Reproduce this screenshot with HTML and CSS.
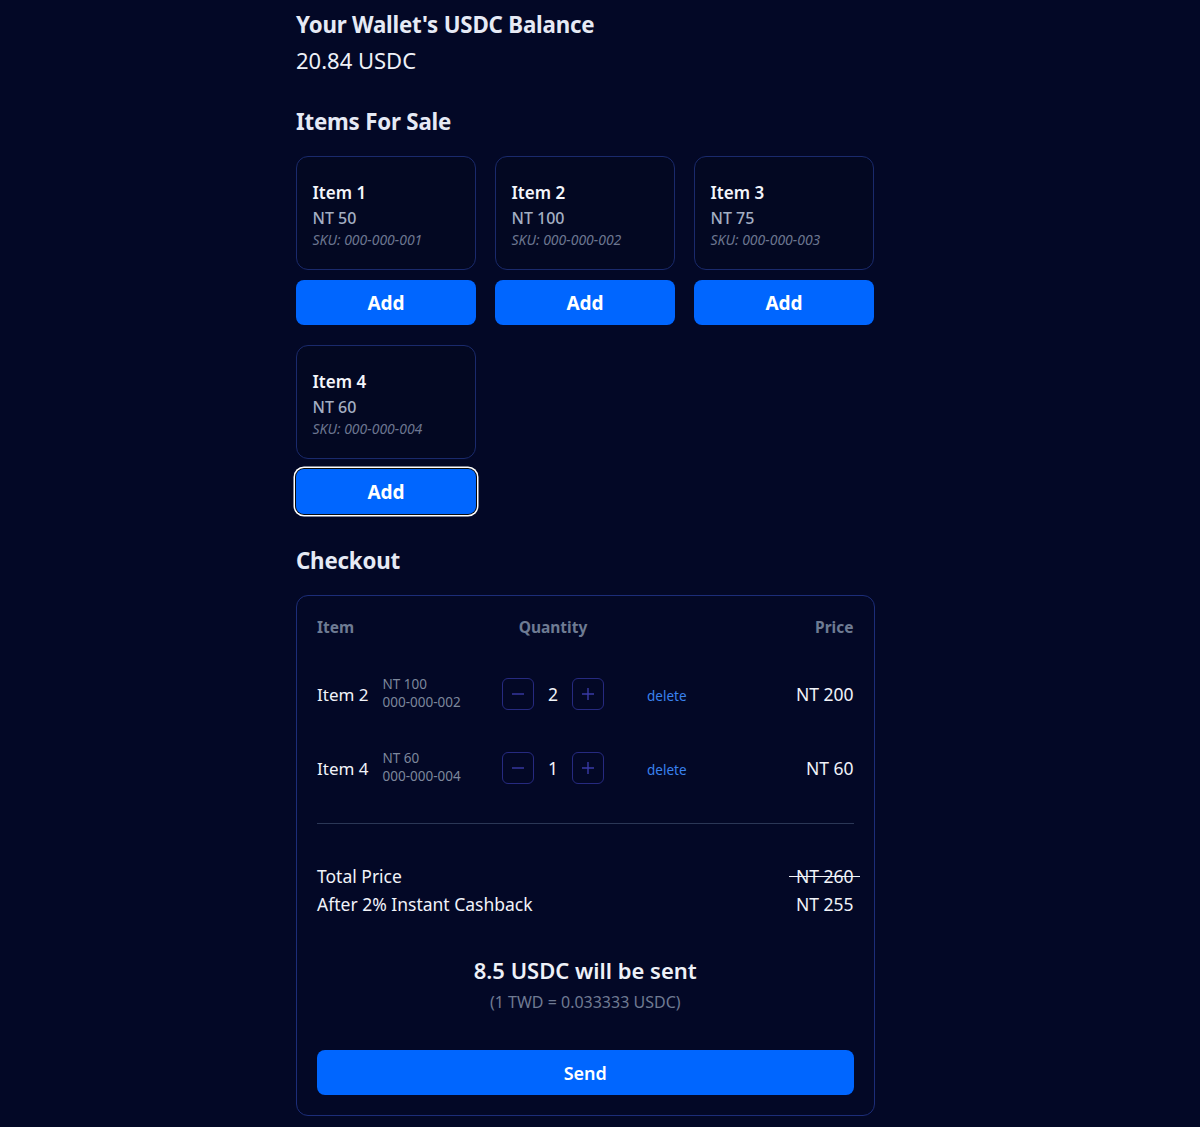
FILE: index.html
```html
<!DOCTYPE html>
<html lang="en">
<head>
<meta charset="utf-8">
<title>Shop</title>
<link rel="stylesheet" href="styles.css">
</head>
<body>
<main class="page">
  <h2 class="heading">Your Wallet's USDC Balance</h2>
  <p class="balance">20.84 USDC</p>

  <h2 class="heading section">Items For Sale</h2>
  <div class="products">
    <div class="product">
      <div class="card">
        <div class="card-title">Item 1</div>
        <div class="card-price">NT 50</div>
        <div class="card-sku">SKU: 000-000-001</div>
      </div>
      <button class="add">Add</button>
    </div>
    <div class="product">
      <div class="card">
        <div class="card-title">Item 2</div>
        <div class="card-price">NT 100</div>
        <div class="card-sku">SKU: 000-000-002</div>
      </div>
      <button class="add">Add</button>
    </div>
    <div class="product">
      <div class="card">
        <div class="card-title">Item 3</div>
        <div class="card-price">NT 75</div>
        <div class="card-sku">SKU: 000-000-003</div>
      </div>
      <button class="add">Add</button>
    </div>
    <div class="product">
      <div class="card">
        <div class="card-title">Item 4</div>
        <div class="card-price">NT 60</div>
        <div class="card-sku">SKU: 000-000-004</div>
      </div>
      <button class="add focused">Add</button>
    </div>
  </div>

  <h2 class="heading section checkout-title">Checkout</h2>
  <div class="checkout">
    <div class="cart">
      <div class="th">Item</div>
      <div class="th th-qty">Quantity</div>
      <div class="th"></div>
      <div class="th th-price">Price</div>

      <div class="td item-cell">
        <span class="item-name">Item 2</span>
        <span class="item-meta">NT 100<br>000-000-002</span>
      </div>
      <div class="td qty">
        <button class="qty-btn" aria-label="decrease"><svg viewBox="0 0 14 14" width="14" height="14"><path d="M1 7h12"/></svg></button>
        <span class="qty-num">2</span>
        <button class="qty-btn" aria-label="increase"><svg viewBox="0 0 14 14" width="14" height="14"><path d="M1 7h12M7 1v12"/></svg></button>
      </div>
      <div class="td del"><a class="delete" href="#">delete</a></div>
      <div class="td price">NT 200</div>

      <div class="td item-cell">
        <span class="item-name">Item 4</span>
        <span class="item-meta">NT 60<br>000-000-004</span>
      </div>
      <div class="td qty">
        <button class="qty-btn" aria-label="decrease"><svg viewBox="0 0 14 14" width="14" height="14"><path d="M1 7h12"/></svg></button>
        <span class="qty-num">1</span>
        <button class="qty-btn" aria-label="increase"><svg viewBox="0 0 14 14" width="14" height="14"><path d="M1 7h12M7 1v12"/></svg></button>
      </div>
      <div class="td del"><a class="delete" href="#">delete</a></div>
      <div class="td price">NT 60</div>
    </div>

    <hr class="divider">

    <div class="totals">
      <div class="total-row"><span>Total Price</span><span class="strike">NT 260</span></div>
      <div class="total-row"><span>After 2% Instant Cashback</span><span>NT 255</span></div>
    </div>

    <div class="summary">
      <div class="send-amount">8.5 USDC will be sent</div>
      <div class="rate">(1 TWD = 0.033333 USDC)</div>
    </div>

    <button class="send">Send</button>
  </div>
</main>
</body>
</html>
```

FILE: styles.css
```css
* { box-sizing: border-box; }

html, body {
  margin: 0;
  background: #030826;
}

body {
  font-family: "Noto Sans", "Open Sans", sans-serif;
  color: #e9edf7;
}

.page {
  width: 579px;
  margin-left: calc(50% - 304px);
  padding: 8px 0 12px;
}

.heading {
  margin: 0;
  font-size: 22.3px;
  line-height: 33px;
  font-weight: 700;
  color: #e6eaf5;
  letter-spacing: -0.2px;
}

.balance {
  margin: 3px 0 0;
  font-size: 22px;
  line-height: 33px;
  font-weight: 400;
  color: #eef1f8;
}

.section { margin-top: 28px; }

.products {
  margin-top: 18px;
  display: grid;
  grid-template-columns: repeat(3, 180px);
  column-gap: 19px;
  row-gap: 20px;
}

.product {
  display: flex;
  flex-direction: column;
  gap: 10px;
}

.card {
  height: 114px;
  border: 1.5px solid #1a2a6c;
  border-radius: 12px;
  padding: 23px 15px 0 15.5px;
  background: #030822;
}

.card-title {
  font-size: 17px;
  line-height: 26px;
  font-weight: 600;
  color: #f3f5fb;
}

.card-price {
  font-size: 16px;
  line-height: 24px;
  color: #a4afc3;
  font-weight: 500;
}

.card-sku {
  font-size: 14px;
  line-height: 20px;
  font-style: italic;
  color: #6c7690;
}

.add {
  height: 45px;
  border: none;
  border-radius: 8px;
  background: #0066ff;
  color: #fff;
  font-family: inherit;
  font-size: 19px;
  font-weight: 700;
  cursor: pointer;
}

.add.focused {
  box-shadow: 0 0 0 1px #0a0a0a, 0 0 0 2.5px #ffffff;
}

.checkout-title { margin-top: 30px; }

.checkout {
  margin-top: 18px;
  border: 1.5px solid #1c2d78;
  border-radius: 12px;
  padding: 20px 20.5px 20px 20px;
}

.cart {
  display: grid;
  grid-template-columns: 185px 102px 1fr 1fr;
  align-items: center;
}

.th {
  font-size: 15.5px;
  line-height: 22px;
  font-weight: 700;
  color: #6e7b93;
  margin-bottom: 19px;
}

.th-qty { text-align: center; }
.th-price { text-align: right; }

.td {
  height: 74px;
  display: flex;
  align-items: center;
}

.item-cell { gap: 14px; }

.item-name {
  font-size: 17px;
  color: #f1f3f9;
}

.item-meta {
  font-size: 13.5px;
  line-height: 18px;
  color: #7d879c;
  margin-top: -2px;
}

.qty { justify-content: space-between; }

.qty-btn {
  width: 32px;
  height: 32px;
  border: 1.5px solid #262a80;
  border-radius: 6px;
  background: transparent;
  padding: 0;
  display: flex;
  align-items: center;
  justify-content: center;
}

.qty-btn svg {
  fill: none;
  stroke: #3a3aa6;
  stroke-width: 1.4;
}

.qty-num {
  font-size: 17.5px;
  color: #f1f3f9;
  width: 38px;
  text-align: center;
}

.del { padding-left: 43px; }

.delete {
  font-size: 13.5px;
  color: #3a82ee;
  text-decoration: none;
  margin-top: 4px;
}

.price {
  justify-content: flex-end;
  font-size: 17.5px;
  color: #f1f3f9;
}

.divider {
  margin: 18px 0 0;
  border: none;
  border-top: 1px solid #2b3756;
}

.totals { margin-top: 38px; }

.total-row {
  display: flex;
  justify-content: space-between;
  font-size: 17.5px;
  line-height: 28px;
  color: #f1f3f9;
}

.strike { position: relative; }

.strike::after {
  content: "";
  position: absolute;
  left: -7px;
  right: -6px;
  top: 14px;
  border-top: 1.5px solid #f1f3f9;
}

.summary {
  margin-top: 36px;
  text-align: center;
}

.send-amount {
  font-size: 22px;
  line-height: 33px;
  font-weight: 600;
  color: #eef1f8;
}

.rate {
  margin-top: 3px;
  font-size: 16px;
  line-height: 24px;
  color: #6f7a92;
}

.send {
  display: block;
  width: 100%;
  margin-top: 36px;
  height: 45px;
  border: none;
  border-radius: 8px;
  background: #0066ff;
  color: #fff;
  font-family: inherit;
  font-size: 18px;
  font-weight: 600;
}
```
